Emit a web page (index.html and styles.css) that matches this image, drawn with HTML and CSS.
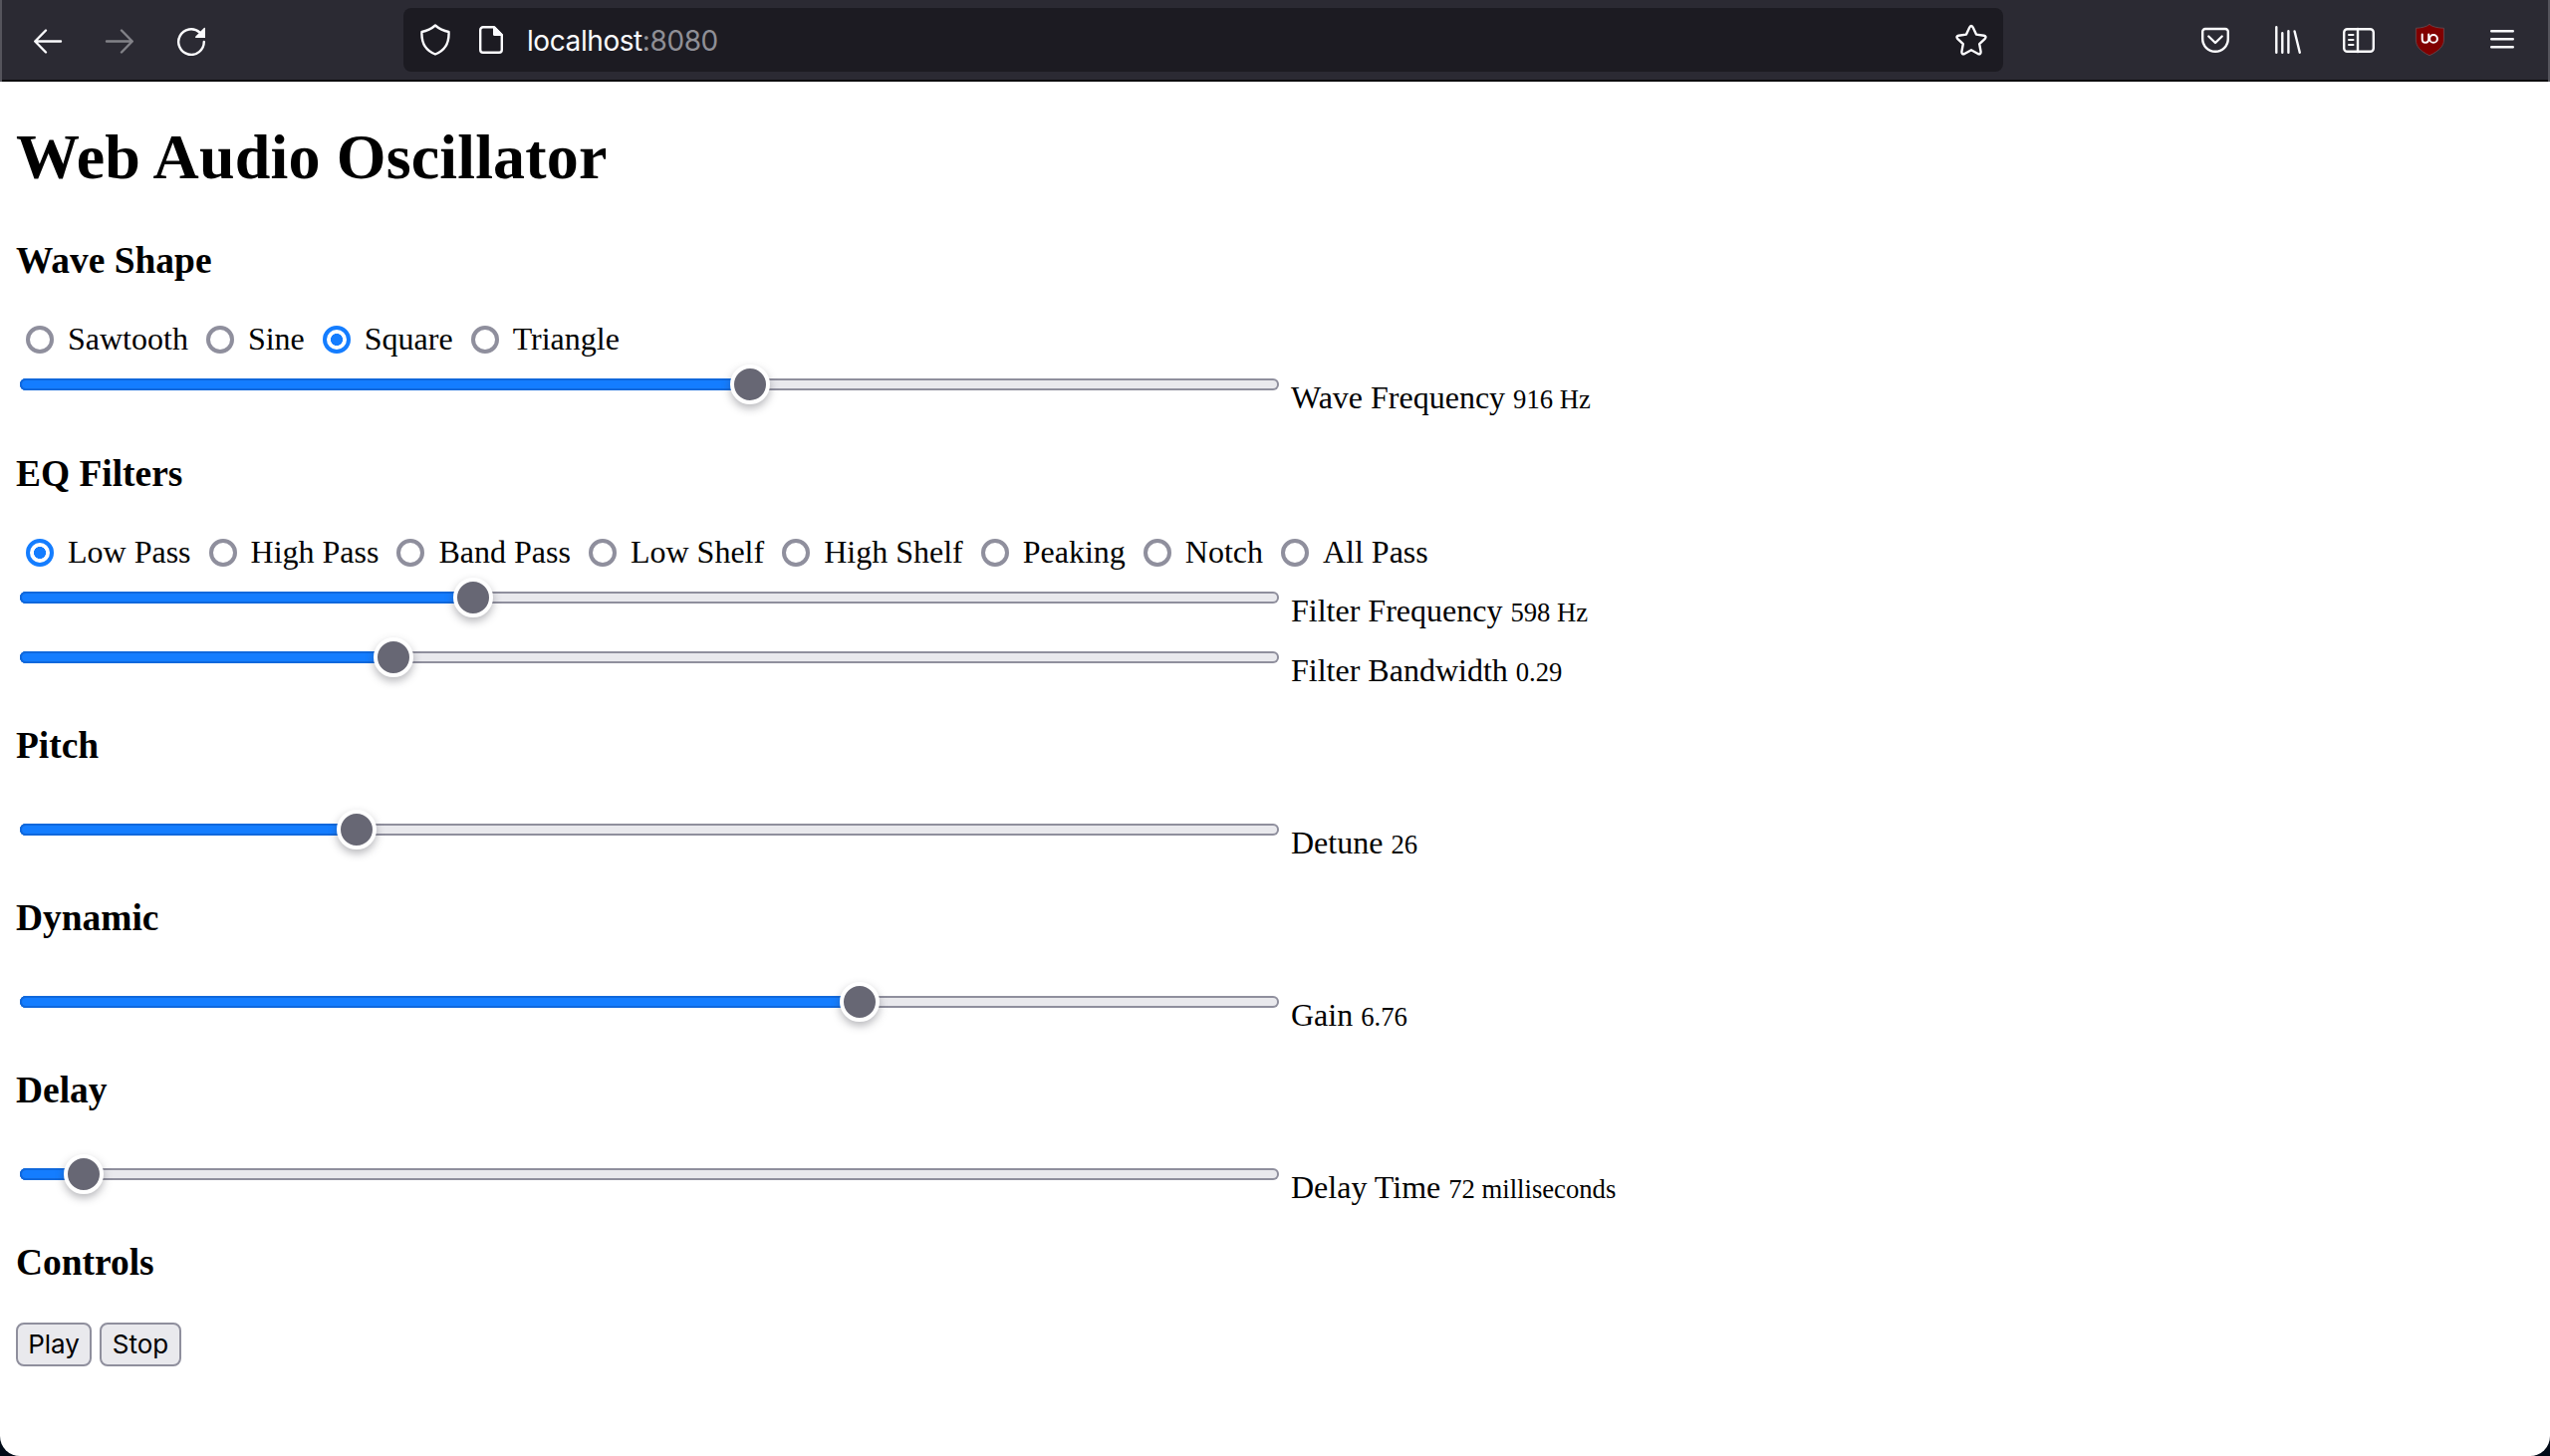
FILE: index.html
```html
<!DOCTYPE html>
<html lang="en">
<head>
<meta charset="utf-8">
<title>Web Audio Oscillator</title>
<link rel="stylesheet" href="styles.css">
</head>
<body>
<div class="window">
  <header class="toolbar">
    <nav class="nav-buttons">
      <svg class="icon" viewBox="0 0 32 32"><path d="M29 17.5H4M14 6.5L3.2 17.5L14 28.5"/></svg>
      <svg class="icon disabled" viewBox="0 0 32 32"><path d="M3 17.5H28M18 6.5L28.8 17.5L18 28.5"/></svg>
      <svg class="icon" viewBox="0 0 32 32"><path d="M28.8 18A12.8 12.8 0 1 1 24.5 8.5"/><path class="solid" d="M30 4V14H20.4Q19.6 13.2 20.4 12.4L28.8 4Q29.4 3.6 30 4Z"/></svg>
    </nav>
    <div class="urlbar">
      <svg class="icon" viewBox="0 0 32 32"><path d="M16 1.5C12 5 8 7 2.5 8C2 17 4 26 16 30.5C28 26 30 17 29.5 8C24 7 20 5 16 1.5Z"/></svg>
      <svg class="icon page-icon" viewBox="0 0 32 32"><path d="M8 3.2H19L26.8 11V26A2.8 2.8 0 0 1 24 28.8H8A2.8 2.8 0 0 1 5.2 26V6A2.8 2.8 0 0 1 8 3.2Z"/><path class="solid" d="M18 3H20L27.5 10.5V12H19.5Q18 12 18 10.5Z"/></svg>
      <div class="address">localhost<span class="port">:8080</span></div>
      <svg class="icon" viewBox="0 0 32 32"><path d="M14.4 3.3Q16 0.8 17.6 3.3L21 10.6L28.8 11.7Q31.6 12.4 29.8 14.8L24.2 20.2L25.6 27.9Q25.6 31 22.8 30L16 26.2L9.2 30Q6.4 31 6.4 27.9L7.8 20.2L2.2 14.8Q0.4 12.4 3.2 11.7L11 10.6Z"/></svg>
    </div>
    <div class="tools">
      <svg class="icon" viewBox="0 0 32 32"><path d="M6 5H26A2.8 2.8 0 0 1 28.8 8V15A12.8 12.8 0 0 1 3.2 15V8A2.8 2.8 0 0 1 6 5Z"/><path d="M9.3 12.5L16 19L22.7 12.5"/></svg>
      <svg class="icon" viewBox="0 0 32 32"><path d="M5.3 3.3V28.7M11.3 9.3V28.7M17.4 7.2V28.7M23.6 7.5L28.8 28.7"/></svg>
      <svg class="icon" viewBox="0 0 32 32"><rect x="1.2" y="5.2" width="29.6" height="22.6" rx="3.4"/><path d="M15 5V28"/><path class="fine" d="M6 11H10.5M6 16H10.5M6 21H10.5"/></svg>
      <svg class="icon" viewBox="0 0 32 32"><path class="badge" d="M15 0.5C12 3 7 4 1.4 4.3V16C1.4 22 5 27 15 31.7C25 27 29.5 22 29.5 16V4.3C23 4 18 3 15 0.5Z"/><path class="fine" d="M7.7 10.5V15.2Q7.7 18.8 11 18.8Q14.2 18.8 14.2 15V10.5"/><circle class="fine" cx="19" cy="14.9" r="3.9"/></svg>
      <svg class="icon" viewBox="0 0 32 32"><path d="M5.2 7.3H26.8M5.2 15.3H26.8M5.2 23.3H26.8"/></svg>
    </div>
  </header>

  <main class="content">
    <h1>Web Audio Oscillator</h1>

    <section class="wave">
      <h3>Wave Shape</h3>
      <div class="radios">
        <label><i class="radio"></i>Sawtooth</label>
        <label><i class="radio"></i>Sine</label>
        <label><i class="radio checked"></i>Square</label>
        <label><i class="radio"></i>Triangle</label>
      </div>
      <div class="range-row"><div class="range"><div class="fill" style="width: 733px"></div><i class="thumb"></i></div><label>Wave Frequency <small>916 Hz</small></label></div>
    </section>

    <section>
      <h3>EQ Filters</h3>
      <div class="radios">
        <label><i class="radio checked"></i>Low Pass</label>
        <label><i class="radio"></i>High Pass</label>
        <label><i class="radio"></i>Band Pass</label>
        <label><i class="radio"></i>Low Shelf</label>
        <label><i class="radio"></i>High Shelf</label>
        <label><i class="radio"></i>Peaking</label>
        <label><i class="radio"></i>Notch</label>
        <label><i class="radio"></i>All Pass</label>
      </div>
      <div class="range-row"><div class="range"><div class="fill" style="width: 455px"></div><i class="thumb"></i></div><label>Filter Frequency <small>598 Hz</small></label></div>
      <div class="range-row"><div class="range"><div class="fill" style="width: 375px"></div><i class="thumb"></i></div><label>Filter Bandwidth <small>0.29</small></label></div>
    </section>

    <section class="single">
      <h3>Pitch</h3>
      <div class="range-row"><div class="range"><div class="fill" style="width: 338px"></div><i class="thumb"></i></div><label>Detune <small>26</small></label></div>
    </section>

    <section class="single">
      <h3>Dynamic</h3>
      <div class="range-row"><div class="range"><div class="fill" style="width: 843px"></div><i class="thumb"></i></div><label>Gain <small>6.76</small></label></div>
    </section>

    <section class="single">
      <h3>Delay</h3>
      <div class="range-row"><div class="range"><div class="fill" style="width: 64px"></div><i class="thumb"></i></div><label>Delay Time <small>72 milliseconds</small></label></div>
    </section>

    <section>
      <h3>Controls</h3>
      <div class="buttons">
        <button class="play">Play</button>
        <button class="stop">Stop</button>
      </div>
    </section>
  </main>
</div>
</body>
</html>
```
FILE: styles.css
```css
* { box-sizing: border-box; }

body {
  margin: 0;
  background: #020b18;
  font: 32px/36px "Liberation Serif", "Times New Roman", serif;
  color: #000;
}

.window {
  height: 1462px;
  overflow: hidden;
  background: #fff;
  border-radius: 0 0 20px 20px;
}

/* Browser toolbar */
.toolbar {
  display: flex;
  align-items: center;
  height: 82px;
  padding: 0 30px;
  background: #2b2a33;
  border: solid #55545c;
  border-width: 0 2px;
  box-shadow: inset 0 -2px #0c0c0d;
}

.nav-buttons,
.tools {
  display: flex;
  gap: 40px;
  margin-bottom: 2px;
}

.urlbar {
  display: flex;
  align-items: center;
  width: 1606px;
  height: 64px;
  margin: 0 197px 2px;
  padding: 0 16px;
  background: #1c1b22;
  border-radius: 8px;
}

.page-icon { margin-left: 24px; }

.address {
  flex: 1;
  margin-left: 20px;
  padding-top: 2px;
  font: 28px/36px Inter, "Liberation Sans", sans-serif;
  letter-spacing: -.42px;
  color: #fbfbfe;
}

.port { color: #8f8f96; }

.icon {
  flex: none;
  width: 32px;
  height: 32px;
  fill: none;
  stroke: #fbfbfe;
  stroke-width: 2.4;
  stroke-linecap: round;
  stroke-linejoin: round;
}

.icon .solid { fill: #fbfbfe; stroke: none; }
.icon .fine { stroke-width: 2; }
.icon .badge { fill: #800000; stroke: #6a5359; stroke-width: .7; }
.disabled { opacity: .42; }

/* Page */
.content { padding: 38px 16px 0; }

h1 {
  margin: 0;
  font-size: 64px;
  line-height: 76px;
  letter-spacing: .16px;
}

h3 {
  margin: 34px 0 37px;
  font-size: 37.44px;
  line-height: 46px;
}

.wave { padding-bottom: 1px; }
.wave h3 { margin-top: 43px; }
.single h3 { margin-bottom: 33px; }

.radios {
  display: flex;
  gap: 8px;
  height: 36px;
}

.radios label {
  display: flex;
  white-space: pre;
}

.radio {
  width: 28px;
  height: 28px;
  margin: 5px 14px 0 10px;
  border: 4px solid #8f8f9d;
  border-radius: 50%;
}

.radio.checked {
  border-color: #147dff;
  background: radial-gradient(circle, #147dff 5.7px, #fff 6.3px);
}

.range-row {
  display: flex;
  height: 60px;
  padding-left: 4px;
}

.range {
  display: flex;
  align-items: center;
  width: 1264px;
  height: 12px;
  margin: 22px 12px 0 0;
  background: #e9e9ed;
  border-radius: 6px;
  box-shadow: inset 0 0 0 2px #8f8f9d;
}

.fill {
  height: 12px;
  background: #147dff;
  border-radius: 6px 0 0 6px;
  box-shadow: inset 0 2px #1068dc, inset 0 -2px #1068dc, inset 2px 0 #1068dc;
}

.thumb {
  flex: none;
  width: 40px;
  height: 40px;
  margin-left: -20px;
  background: #676774;
  border: 4px solid #fff;
  border-radius: 50%;
  box-shadow: 0 4px 8px rgba(58, 57, 68, .36);
}

.range-row label { margin-top: 23px; }

small { font-size: 26.67px; line-height: 1; }

.buttons { display: flex; gap: 8px; }

button {
  width: 76px;
  height: 44px;
  padding: 0;
  border: 2px solid #8f8f9d;
  border-radius: 8px;
  background: #e9e9ed;
  color: #000;
  font: 26px/40px Inter, "Liberation Sans", sans-serif;
}

.stop { width: 82px; }
```
